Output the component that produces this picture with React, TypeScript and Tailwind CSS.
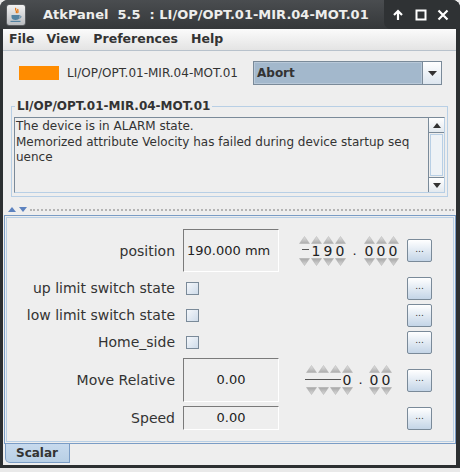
import React from "react";

function UpArrow() {
  return (
    <svg width="11" height="8" viewBox="0 0 11 8">
      <polygon points="5.5,0.5 10.5,7.5 0.5,7.5" fill="url(#wg-up)" stroke="#b0b0b0" strokeWidth="0.5" />
    </svg>
  );
}

function DownArrow() {
  return (
    <svg width="11" height="8" viewBox="0 0 11 8">
      <polygon points="0.5,0.5 10.5,0.5 5.5,7.5" fill="url(#wg-dn)" stroke="#a8a8a8" strokeWidth="0.5" />
    </svg>
  );
}

function WheelCol({ d, short }: { d: string; short?: boolean }) {
  return (
    <div className="w-[12px] flex flex-col items-center">
      <UpArrow />
      <div className="h-[14px] w-full flex items-center justify-end text-[14px] leading-[14px] text-[#222222]">
        {d === "" ? (
          <div className={"h-px bg-[#555555] -mt-[2px] " + (short ? "w-[7px] mr-[1px]" : "w-full")} />
        ) : (
          <span className="w-full text-center">{d}</span>
        )}
      </div>
      <DownArrow />
    </div>
  );
}

function Wheel({ ints, fracs, dot, short }: { ints: string[]; fracs: string[]; dot: string; short?: boolean }) {
  return (
    <div className="flex">
      {ints.map((d, i) => (
        <WheelCol key={"i" + i} d={d} short={short} />
      ))}
      <div className={"flex items-center justify-center text-[13px] text-[#222222] " + dot}>.</div>
      {fracs.map((d, i) => (
        <WheelCol key={"f" + i} d={d} />
      ))}
    </div>
  );
}

function DotsButton() {
  return (
    <div className="w-[25px] h-[23px] border border-[#7a8a99] rounded-[2px] bg-linear-to-b from-white to-[#c4d5e7] flex items-center justify-center text-[9px] leading-none text-[#333333] pb-[3px]">
      ...
    </div>
  );
}

function Check() {
  return (
    <div className="ml-[3px] w-[13px] h-[13px] border border-[#7a8a99] bg-linear-to-br from-[#f4f7fb] to-[#cfdcea]" />
  );
}

function Row({
  label,
  h,
  children,
  wheel,
}: {
  label: string;
  h: string;
  children: React.ReactNode;
  wheel?: React.ReactNode;
}) {
  return (
    <div className={"flex items-center " + h}>
      <div className="w-[168px] text-right text-[14px] leading-none text-[#333333] whitespace-nowrap">{label}</div>
      <div className="ml-[8px] w-[96px] h-full flex items-center">{children}</div>
      <div className="w-[128px] h-full flex items-center">{wheel}</div>
      <DotsButton />
    </div>
  );
}

function JavaIcon() {
  return (
    <div className="w-[20px] h-[22px] rounded-[3px] border border-[#5a5d60] bg-linear-to-b from-[#f2f2f2] to-[#b9bcbf] flex items-center justify-center">
      <svg width="14" height="16" viewBox="0 0 14 16">
        <path d="M7 1 C5 3 9 4 7 6 M9 2 C8 3.5 10 4.5 8.5 6" stroke="#e76f00" strokeWidth="1.2" fill="none" />
        <path d="M2.5 8 H10.5 V10 C10.5 12 9 13 6.5 13 C4 13 2.5 12 2.5 10 Z" fill="#5382a1" />
        <path d="M10.5 8.7 C12.5 8.7 12.5 11 10.3 11.2" stroke="#5382a1" strokeWidth="1" fill="none" />
        <rect x="1.5" y="13.8" width="10" height="1.2" fill="#5382a1" />
      </svg>
    </div>
  );
}

export default function App() {
  return (
    <div className="w-[460px] h-[472px] bg-[#e9e9e9] font-['DejaVu_Sans',sans-serif] text-[#333333] overflow-hidden">
      <svg width="0" height="0" className="absolute">
        <defs>
          <linearGradient id="wg-up" x1="0" y1="0" x2="0" y2="1">
            <stop offset="0" stopColor="#e2e2e2" />
            <stop offset="1" stopColor="#ababab" />
          </linearGradient>
          <linearGradient id="wg-dn" x1="0" y1="0" x2="0" y2="1">
            <stop offset="0" stopColor="#a6a6a6" />
            <stop offset="1" stopColor="#dadada" />
          </linearGradient>
        </defs>
      </svg>

      <div className="h-[468px] flex flex-col bg-[#2c2f31] rounded-t-[8px] overflow-hidden">
        {/* title bar */}
        <div className="h-[29px] flex items-center bg-linear-to-b from-[#4a4d50] to-[#35383a]">
          <div className="ml-[6px]">
            <JavaIcon />
          </div>
          <div className="ml-[17px] text-[13px] font-bold text-[#eeeeec] whitespace-pre">
            AtkPanel  5.5  : LI/OP/OPT.01-MIR.04-MOT.01
          </div>
          <div className="ml-auto h-full w-[76px] flex items-center bg-[#2f3234] rounded-bl-[7px]">
            <svg width="12" height="12" viewBox="0 0 12 12" className="ml-[8px]">
              <path d="M6 11 V2 M2 6 L6 2 L10 6" stroke="#ffffff" strokeWidth="2.2" fill="none" />
            </svg>
            <svg width="12" height="12" viewBox="0 0 12 12" className="ml-[11px]">
              <rect x="1.5" y="1.5" width="9" height="9" stroke="#ffffff" strokeWidth="2" fill="none" />
            </svg>
            <svg width="12" height="12" viewBox="0 0 12 12" className="ml-[10px]">
              <path d="M1.5 1.5 L10.5 10.5 M10.5 1.5 L1.5 10.5" stroke="#ffffff" strokeWidth="2.2" fill="none" />
            </svg>
          </div>
        </div>

        <div className="flex-1 flex flex-col ml-[3px] mr-[4px] mb-[3px] bg-[#eeeeee]">
          {/* menu bar */}
          <div className="h-[21px] flex items-center bg-linear-to-b from-[#fbfbfb] to-[#e4e4e4] text-[12.5px] font-bold text-[#333333]">
            <span className="ml-[6px]">File</span>
            <span className="ml-[12px]">View</span>
            <span className="ml-[13px]">Preferences</span>
            <span className="ml-[13px]">Help</span>
          </div>

          <div className="flex-1 flex flex-col border-t border-[#b8c2cc]">
            {/* device row */}
            <div className="mt-[10px] h-[24px] flex items-center">
              <div className="ml-[16px] w-[40px] h-[14px] bg-[#ff8c00]" />
              <div className="ml-[8px] text-[12px] text-[#333333]">LI/OP/OPT.01-MIR.04-MOT.01</div>
              <div className="ml-auto mr-[14px] w-[189px] h-[24px] border border-[#7a8a99] flex">
                <div className="flex-1 bg-[#a3b8cc] border border-[#b8c8d8] flex items-center pl-[2px] text-[12px] font-bold text-[#333333]">
                  Abort
                </div>
                <div className="w-[19px] border-l border-[#7a8a99] bg-linear-to-b from-white to-[#dde6ef] flex items-center justify-center">
                  <svg width="9" height="5" viewBox="0 0 9 5">
                    <polygon points="0,0 9,0 4.5,5" fill="#333333" />
                  </svg>
                </div>
              </div>
            </div>

            {/* status group */}
            <fieldset className="mt-[14px] mx-[8px] border border-[#b8cfe5] px-[2px] pb-[3px]">
              <legend className="ml-[1px] px-[2px] text-[12px] leading-[15px] font-bold text-[#333333]">
                LI/OP/OPT.01-MIR.04-MOT.01
              </legend>
              <div className="mt-[3px] h-[76px] flex border border-t-[#7a8a99] border-l-[#7a8a99] border-b-[#b8cfe5] border-r-[#b8cfe5]">
                <div className="flex-1 pl-[1px] pt-[1px] text-[12px] leading-[15.5px] text-[#333333]">
                  The device is in ALARM state.
                  <br />
                  Memorized attribute Velocity has failed during device startup seq
                  <br />
                  uence
                </div>
                <div className="w-[16px] flex flex-col border-l border-[#7a8a99] bg-[#eeeeee]">
                  <div className="h-[15px] border-b border-[#7a8a99] bg-linear-to-b from-white to-[#e3e9ef] flex items-center justify-center">
                    <svg width="8" height="5" viewBox="0 0 8 5">
                      <polygon points="4,0 8,5 0,5" fill="#333333" />
                    </svg>
                  </div>
                  <div className="flex-1 m-[1px] border border-[#b8cfe5] bg-[#eef2f6]" />
                  <div className="h-[15px] border-t border-[#7a8a99] bg-linear-to-b from-white to-[#e3e9ef] flex items-center justify-center">
                    <svg width="8" height="5" viewBox="0 0 8 5">
                      <polygon points="0,0 8,0 4,5" fill="#333333" />
                    </svg>
                  </div>
                </div>
              </div>
            </fieldset>

            {/* split divider */}
            <div className="mt-[8px] h-[9px] flex items-center bg-[#eeeeee]">
              <svg width="8" height="5" viewBox="0 0 8 5" className="ml-[5px]">
                <polygon points="4,0 8,5 0,5" fill="#5c82bf" />
              </svg>
              <svg width="8" height="5" viewBox="0 0 8 5" className="ml-[3px]">
                <polygon points="0,0 8,0 4,5" fill="#5c82bf" />
              </svg>
              <div className="flex-1 ml-[3px] mr-[2px] border-t-2 border-dotted border-[#b5b5b5]" />
            </div>

            {/* tabbed pane */}
            <div className="flex-1 flex flex-col">
              <div className="flex-1 mt-[1px] ml-[1px] flex flex-col border border-[#7a9cc5] bg-[#eeeeee]">
                <div className="flex-1 m-[1px] border border-[#b8cfe5] pt-[11px]">
                  <Row
                    label="position"
                    h="h-[43px]"
                    wheel={
                      <div className="pl-[19px]">
                        <Wheel ints={["", "1", "9", "0"]} fracs={["0", "0", "0"]} dot="w-[17px]" short />
                      </div>
                    }
                  >
                    <div className="w-full h-full border border-t-[#7a7a7a] border-l-[#7a7a7a] border-b-white border-r-white flex items-center pl-[3px] text-[13px] text-[#222222]">
                      190.000 mm
                    </div>
                  </Row>
                  <div className="mt-[5px]">
                    <Row label="up limit switch state" h="h-[22px]">
                      <Check />
                    </Row>
                  </div>
                  <div className="mt-[5px]">
                    <Row label="low limit switch state" h="h-[22px]">
                      <Check />
                    </Row>
                  </div>
                  <div className="mt-[5px]">
                    <Row label="Home_side" h="h-[22px]">
                      <Check />
                    </Row>
                  </div>
                  <div className="mt-[5px]">
                    <Row
                      label="Move Relative"
                      h="h-[44px]"
                      wheel={
                        <div className="pl-[26px]">
                          <Wheel ints={["", "", "", "0"]} fracs={["0", "0"]} dot="w-[15px]" />
                        </div>
                      }
                    >
                      <div className="w-full h-full border border-t-[#7a7a7a] border-l-[#7a7a7a] border-b-white border-r-white flex items-center justify-center text-[13px] text-[#222222]">
                        0.00
                      </div>
                    </Row>
                  </div>
                  <div className="mt-[4px]">
                    <Row label="Speed" h="h-[24px]">
                      <div className="w-full h-full border border-t-[#7a7a7a] border-l-[#7a7a7a] border-b-white border-r-white flex items-center justify-center text-[13px] text-[#222222]">
                        0.00
                      </div>
                    </Row>
                  </div>
                </div>
              </div>
              <div className="h-[21px] flex">
                <div className="ml-[2px] w-[65px] h-[19px] border-x border-b border-[#7a9cc5] rounded-bl-[5px] bg-linear-to-b from-[#c7daee] to-[#b8cfe5] flex items-center pl-[10px] text-[12px] font-bold text-[#333333]">
                  Scalar
                </div>
              </div>
            </div>
          </div>
        </div>
      </div>
    </div>
  );
}
